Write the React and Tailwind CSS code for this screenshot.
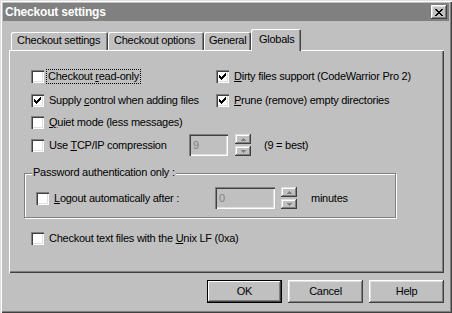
const CHECK = [
  [6, 0], [5, 1], [6, 1], [0, 2], [4, 2], [5, 2], [6, 2],
  [0, 3], [1, 3], [3, 3], [4, 3], [5, 3],
  [0, 4], [1, 4], [2, 4], [3, 4], [4, 4],
  [1, 5], [2, 5], [3, 5], [2, 6],
]

function Check({ on }) {
  return (
    <div className="w-[13px] h-[13px] shrink-0 bg-white shadow-[inset_1px_1px_0_#808080,inset_2px_2px_0_#404040,inset_-1px_-1px_0_#fff,inset_-2px_-2px_0_#dfdfdf] flex items-center justify-center">
      {on && (
        <svg width="7" height="7" viewBox="0 0 7 7" shapeRendering="crispEdges">
          {CHECK.map(([x, y]) => <rect key={x + '-' + y} x={x} y={y} width="1" height="1" fill="#000" />)}
        </svg>
      )}
    </div>
  )
}

function Row({ on, children, className = '' }) {
  return (
    <div className={'flex items-center h-[13px] ' + className}>
      <Check on={on} />
      <span className="ml-[5px] leading-[13px] whitespace-nowrap">{children}</span>
    </div>
  )
}

function Arrow({ up }) {
  return (
    <svg width="5" height="3" viewBox="0 0 5 3" shapeRendering="crispEdges">
      <path d={up ? 'M2 0h1v1h1v1h1v1H0V2h1V1h1z' : 'M0 0h5v1H4v1H3v1H2V2H1V1H0z'} fill="#808080" />
    </svg>
  )
}

function Spin() {
  return (
    <div className="flex flex-col gap-[2px] w-[16px]">
      {[true, false].map((up) => (
        <div key={up ? 'u' : 'd'} className="h-[10px] bg-[#c0c0c0] flex items-center justify-center shadow-[inset_-1px_-1px_0_#404040,inset_1px_1px_0_#dfdfdf,inset_-2px_-2px_0_#808080,inset_2px_2px_0_#fff]">
          <Arrow up={up} />
        </div>
      ))}
    </div>
  )
}

function Field({ value, w }) {
  return (
    <div className={'h-[22px] bg-[#c0c0c0] pl-[4px] flex items-center text-[#808080] shadow-[inset_1px_1px_0_#808080,inset_2px_2px_0_#404040,inset_-1px_-1px_0_#fff,inset_-2px_-2px_0_#dfdfdf] ' + w}>
      {value}
    </div>
  )
}

function Button({ children, def }) {
  return (
    <div
      className={
        'w-[75px] h-[23px] flex items-center justify-center bg-[#c0c0c0] ' +
        (def
          ? 'shadow-[inset_0_0_0_1px_#000,inset_-2px_-2px_0_#404040,inset_2px_2px_0_#fff,inset_-3px_-3px_0_#808080]'
          : 'shadow-[inset_-1px_-1px_0_#404040,inset_1px_1px_0_#fff,inset_-2px_-2px_0_#808080,inset_2px_2px_0_#dfdfdf]')
      }
    >
      {children}
    </div>
  )
}

const tabs = [
  { label: 'Checkout settings', w: 'w-[97px] pl-[6px]' },
  { label: 'Checkout options', w: 'w-[96px] pl-[6px]' },
  { label: 'General', w: 'w-[47px] pl-[5px]' },
]

export default function App() {
  return (
    <div className="w-[452px] h-[313px] bg-[#c0c0c0] p-[3px] flex flex-col text-[11px] tracking-[-0.25px] text-black font-['Liberation_Sans',Arial,sans-serif] shadow-[inset_1px_1px_0_#dfdfdf,inset_2px_2px_0_#fff,inset_-1px_-1px_0_#404040,inset_-2px_-2px_0_#808080]">
      <div className="h-[18px] bg-[#808080] flex items-center justify-between pl-[2px] pr-[2px]">
        <span className="text-white font-bold text-[12px] tracking-[-0.2px]">Checkout settings</span>
        <div className="w-[16px] h-[14px] bg-[#c0c0c0] flex items-center justify-center shadow-[inset_-1px_-1px_0_#404040,inset_1px_1px_0_#fff,inset_-2px_-2px_0_#808080,inset_2px_2px_0_#dfdfdf]">
          <svg width="8" height="7" viewBox="0 0 8 7" shapeRendering="crispEdges">
            <path d="M0 0h2v1h1v1h2V1h1V0h2v1H7v1H6v1H5v1h1v1h1v1h1v1H6V6H5V5H3v1H2v1H0V6h1V5h1V4h1V3H2V2H1V1H0z" fill="#000" />
          </svg>
        </div>
      </div>

      <div className="ml-[6px] w-[435px] mt-[8px] flex flex-col">
        <div className="h-[21px] flex items-end pl-[2px] relative z-10">
          {tabs.map((t) => (
            <div key={t.label} className={'h-[18px] bg-[#c0c0c0] flex items-center rounded-t-[2px] shadow-[inset_1px_1px_0_#fff,inset_-1px_0_0_#404040,inset_-2px_0_0_#808080] ' + t.w}>
              <span className="whitespace-nowrap -mt-[1px]">{t.label}</span>
            </div>
          ))}
          <div className="w-[50px] h-[22px] -mb-[1px] bg-[#c0c0c0] pl-[8px] pt-[2px] rounded-t-[2px] shadow-[inset_1px_1px_0_#fff,inset_-1px_0_0_#404040,inset_-2px_0_0_#808080]">
            Globals
          </div>
        </div>

        <div className="h-[223px] flex flex-col shadow-[inset_1px_1px_0_#fff,inset_-1px_-1px_0_#404040,inset_-2px_-2px_0_#808080]">
          <div className="mt-[20px] ml-[22px] flex">
            <div className="w-[185px] flex flex-col">
              <div className="flex items-center h-[13px]">
                <Check />
                <span className="ml-[3px] px-[1px] leading-[13px] outline outline-1 outline-dotted outline-black whitespace-nowrap">
                  Checkout <u>r</u>ead-only
                </span>
              </div>
              <Row on className="mt-[11px]">Supply <u>c</u>ontrol when adding files</Row>
              <Row className="mt-[9px]"><u>Q</u>uiet mode (less messages)</Row>
            </div>
            <div className="flex flex-col">
              <Row on><u>D</u>irty files support (CodeWarrior Pro 2)</Row>
              <Row on className="mt-[11px]"><u>P</u>rune (remove) empty directories</Row>
            </div>
          </div>

          <div className="mt-[5px] ml-[22px] h-[22px] flex items-center">
            <div className="w-[158px]">
              <Row>Use <u>T</u>CP/IP compression</Row>
            </div>
            <Field value="9" w="w-[39px]" />
            <div className="ml-[7px]"><Spin /></div>
            <span className="ml-[13px]">(9 = best)</span>
          </div>

          <div className="mt-[17px] ml-[15px] w-[372px] h-[45px] relative border border-[#808080] shadow-[1px_1px_0_#fff,inset_1px_1px_0_#fff]">
            <span className="absolute left-[7px] -top-[8px] px-[1px] bg-[#c0c0c0] leading-[13px] whitespace-nowrap">
              Password authentication only :
            </span>
            <div className="mt-[13px] ml-[11px] h-[22px] flex items-center">
              <div className="w-[179px]">
                <Row><u>L</u>ogout automatically after :</Row>
              </div>
              <Field value="0" w="w-[60px]" />
              <div className="ml-[6px]"><Spin /></div>
              <span className="ml-[14px]">minutes</span>
            </div>
          </div>

          <Row className="mt-[14px] ml-[22px]">Checkout text files with the <u>U</u>nix LF (0xa)</Row>
        </div>

        <div className="mt-[7px] flex justify-end gap-[6px]">
          <Button def>OK</Button>
          <Button>Cancel</Button>
          <Button>Help</Button>
        </div>
      </div>
    </div>
  )
}
